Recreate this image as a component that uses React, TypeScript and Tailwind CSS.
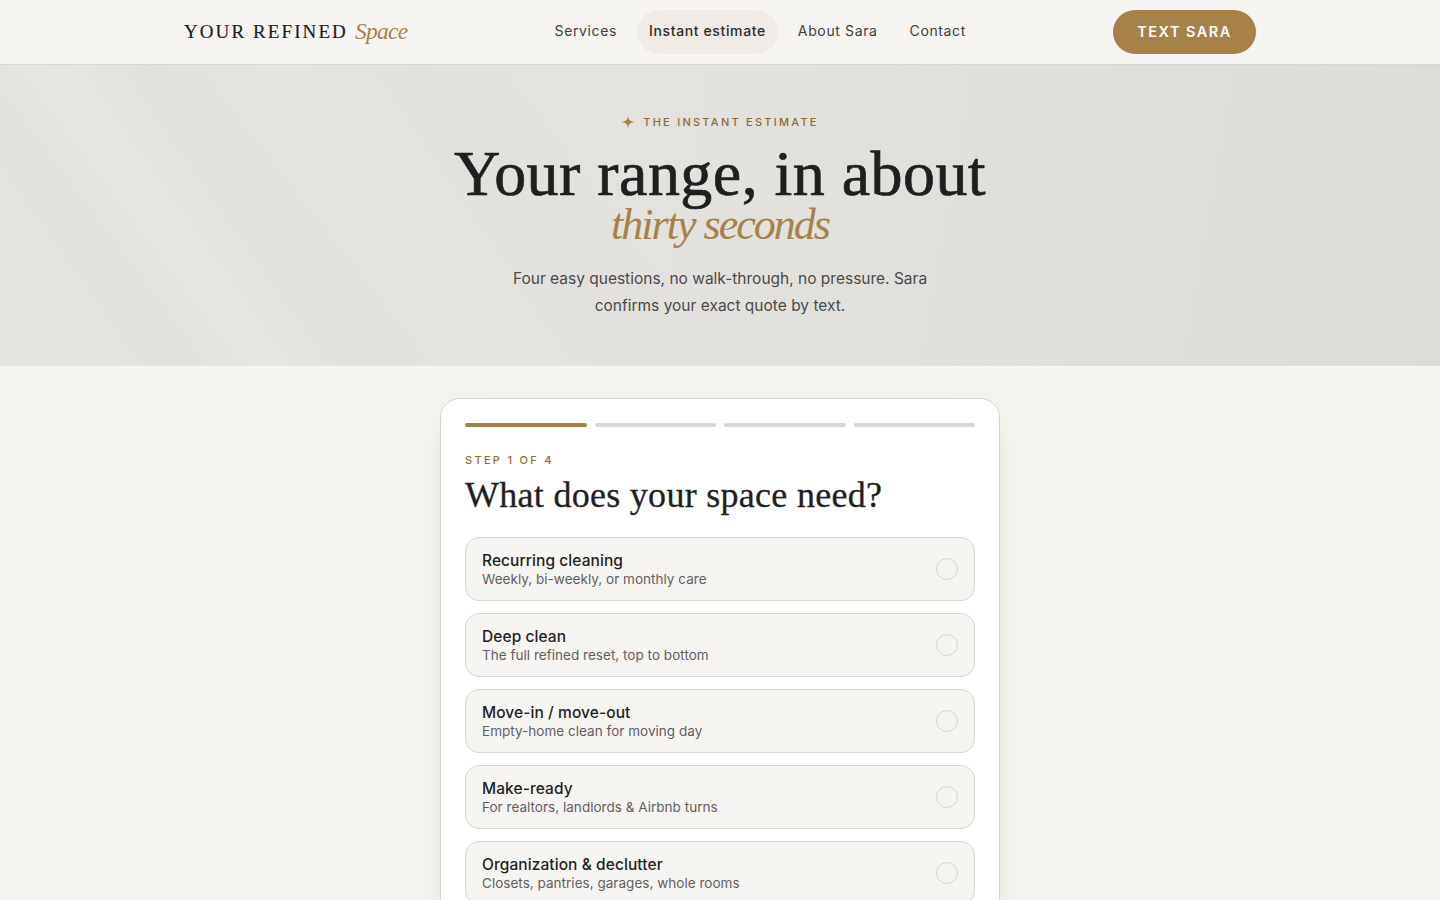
import React from "react";

const serif = "font-['Liberation_Serif',serif]";
const sans = "font-['Inter','Noto_Sans',sans-serif]";

const nav = ["Services", "Instant estimate", "About Sara", "Contact"];
const options = [
  ["Recurring cleaning", "Weekly, bi-weekly, or monthly care"],
  ["Deep clean", "The full refined reset, top to bottom"],
  ["Move-in / move-out", "Empty-home clean for moving day"],
  ["Make-ready", "For realtors, landlords & Airbnb turns"],
  ["Organization & declutter", "Closets, pantries, garages, whole rooms"],
];

export default function App() {
  return (
    <div className={`h-screen overflow-hidden bg-[#f7f5f1] text-[#1f1f1f] ${sans}`}>
      <header className="h-[65px] border-b border-[#d8d6cf] bg-[#f7f5f1]">
        <div className="mx-auto flex h-16 max-w-[1120px] items-center justify-between px-6">
          <a className="flex items-center gap-[7px]">
            <span className={`${serif} text-[19px] tracking-[0.11em] text-[#1f1f1f] [-webkit-text-stroke:0.2px_#1f1f1f]`}>YOUR REFINED</span>
            <span className={`${serif} text-[23.5px] italic leading-none tracking-[-0.03em] text-[#a68249]`}>Space</span>
          </a>
          <nav className="flex items-center gap-2">
            {nav.map((n, i) => (
              <a
                key={n}
                className={`flex h-11 items-center rounded-full px-3 pb-[3px] text-[14px] tracking-[0.045em] ${i === 1 ? "bg-[#f0ebe4] font-medium text-[#2b2b2b]" : "text-[#3d3d3d]"}`}
              >
                {n}
              </a>
            ))}
          </nav>
          <a className="flex h-11 w-[143px] items-center justify-center rounded-full bg-[#a68249] pb-[1px] text-[14.5px] font-semibold tracking-[0.1em] text-white">
            TEXT SARA
          </a>
        </div>
      </header>

      <section className="flex h-[301px] flex-col items-center bg-[linear-gradient(54deg,rgba(0,0,0,0)_6%,rgba(0,0,0,0.012)_11%,rgba(255,255,255,0.1)_16%,rgba(0,0,0,0.012)_22%,rgba(255,255,255,0.05)_30%,rgba(0,0,0,0.008)_38%,rgba(0,0,0,0)_46%),linear-gradient(100deg,#e4e3df_0%,#e3e2de_45%,#dcdbd6_100%)] pt-[47px]">
        <div className="flex h-5 items-center gap-2 text-[11px] font-medium tracking-[0.205em] text-[#8f6b32]">
          <svg width="14" height="14" viewBox="0 0 14 14" className="fill-[#a68249]">
            <path d="M7 0 C7.3 4.8 8.6 6.5 14 7 C8.6 7.5 7.3 9.2 7 14 C6.7 9.2 5.4 7.5 0 7 C5.4 6.5 6.7 4.8 7 0Z" />
          </svg>
          <span>THE INSTANT ESTIMATE</span>
        </div>
        <h1 className={`${serif} mt-[17px] text-[64px] font-normal leading-[50px] tracking-[0.007em] text-[#1f1f1f] [-webkit-text-stroke:0.7px_#1f1f1f]`}>
          Your range, in about
        </h1>
        <div className={`${serif} h-[52px] text-[44px] italic leading-[52px] tracking-[-0.045em] text-[#a68249]`}>
          thirty seconds
        </div>
        <p className="mt-[14px] w-[480px] text-center text-[15.5px] leading-[27px] text-[#4a4a4a]">
          Four easy questions, no walk-through, no pressure. Sara confirms your exact quote by text.
        </p>
      </section>

      <main className="flex justify-center pt-8">
        <div className="w-[560px] rounded-[20px] border border-[#d8d6cf] bg-white p-6 shadow-[0_10px_40px_rgba(60,50,30,0.07)]">
          <div className="flex gap-2">
            {[0, 1, 2, 3].map((i) => (
              <div key={i} className={`h-1 flex-1 rounded-full ${i === 0 ? "bg-[#a68249]" : "bg-[#d8d6cf]"}`} />
            ))}
          </div>
          <div className="mt-[26px] text-[11px] font-medium leading-[14px] tracking-[0.21em] text-[#8f6b32]">STEP 1 OF 4</div>
          <h2 className={`${serif} mt-[6px] text-[36px] font-normal leading-[44px] tracking-[0.008em] text-[#1f1f1f] [-webkit-text-stroke:0.3px_#1f1f1f]`}>
            What does your space need?
          </h2>
          <div className="mt-[20px] flex flex-col gap-3">
            {options.map(([t, d]) => (
              <div key={t} className="flex h-16 items-center justify-between rounded-[14px] border border-[#d8d6cf] bg-[#f7f5f1] pl-4 pr-4">
                <div className="flex flex-col">
                  <span className="text-[15.5px] font-medium leading-[19px] tracking-[0.005em] text-[#1f1f1f]">{t}</span>
                  <span className="text-[13.5px] leading-[18px] tracking-[0.002em] text-[#5f5f5f]">{d}</span>
                </div>
                <span className="h-[22px] w-[22px] rounded-full border border-[#d8d6cf]" />
              </div>
            ))}
          </div>
        </div>
      </main>
    </div>
  );
}
